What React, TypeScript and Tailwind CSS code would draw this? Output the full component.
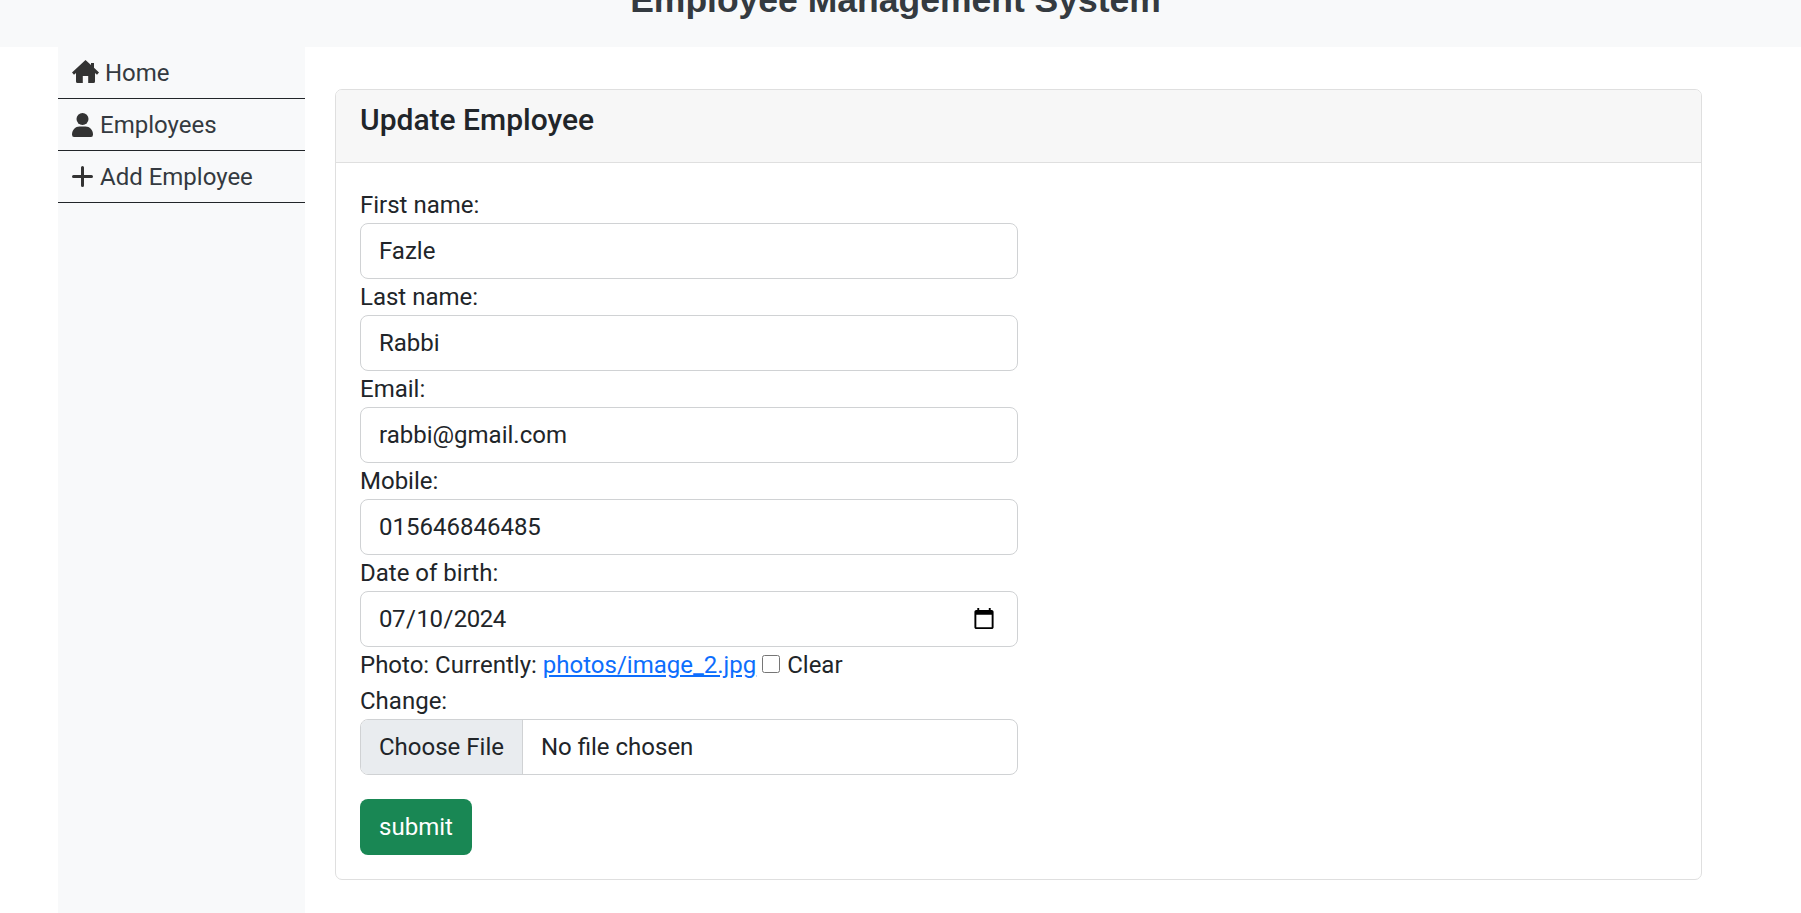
import React from "react";

const inputClass =
  "block w-full h-[56px] px-[18px] py-[9px] text-[24px] leading-[36px] text-[#212529] bg-white border border-[#d0d2d4] rounded-[8px] outline-none";

function HomeIcon() {
  return (
    <svg viewBox="0 0 27 23" className="w-[27px] h-[23px] shrink-0 -mr-[1px] -mt-[2px]" fill="#333">
      <path d="M13.5 0 L19 5 V3 H22 V7.8 L27 12.5 L25 14.7 L23 13 V21.5 Q23 23 21.5 23 H16.2 V16 H10.8 V23 H5.5 Q4 23 4 21.5 V13 L2 14.7 L0 12.5 Z" />
    </svg>
  );
}

function UserIcon() {
  return (
    <svg viewBox="0 0 21 24" className="w-[21px] h-[24px] shrink-0" fill="#333">
      <circle cx="10.5" cy="6" r="6" />
      <path d="M0 21.5 C0 17 3.5 13.5 7.5 13.5 H13.5 C17.5 13.5 21 17 21 21.5 Q21 24 19 24 H2 Q0 24 0 21.5 Z" />
    </svg>
  );
}

function PlusIcon() {
  return (
    <svg viewBox="0 0 21 21" className="w-[21px] h-[21px] shrink-0" fill="none" stroke="#333" strokeWidth="3" strokeLinecap="round">
      <path d="M10.5 1.5 V19.5 M1.5 10.5 H19.5" />
    </svg>
  );
}

function Field({ label, value, type = "text" }: { label: string; value: string; type?: string }) {
  return (
    <div>
      <label className="block leading-[36px]">{label}</label>
      <input type={type} defaultValue={value} className={inputClass} />
    </div>
  );
}

function NavItem({ icon, label }: { icon: React.ReactNode; label: string }) {
  return (
    <a className="flex items-center h-[52px] px-[14px] gap-[7px] border-b border-[#212529] text-[24px] text-[#343a40]">
      {icon}
      <span>{label}</span>
    </a>
  );
}

export default function App() {
  return (
    <div className="min-h-[913px] bg-white text-[24px] leading-[36px] text-[#212529] font-['Roboto',sans-serif] overflow-hidden">
      <header className="h-[47px] bg-[#f8f9fa] overflow-hidden pr-[10px]">
        <h2 className="mt-[-27px] text-center text-[35.5px] leading-[54px] font-bold text-[#343a40] font-['Liberation_Sans',sans-serif]">
          Employee Management System
        </h2>
      </header>
      <div className="flex h-[866px] pl-[58px]">
        <aside className="w-[247px] bg-[#f8f9fa]">
          <NavItem icon={<HomeIcon />} label="Home" />
          <NavItem icon={<UserIcon />} label="Employees" />
          <NavItem icon={<PlusIcon />} label="Add Employee" />
        </aside>
        <main className="pl-[30px] pt-[42px]">
          <div className="w-[1367px] border border-[#dfdfdf] rounded-[7px] overflow-hidden">
            <div className="h-[73px] px-[24px] pt-[8px] bg-[#f7f7f7] border-b border-[#dfdfdf]">
              <h4 className="text-[30px] leading-[43px] font-medium">Update Employee</h4>
            </div>
            <form className="p-[24px]">
              <div className="w-[658px]">
                <Field label="First name:" value="Fazle" />
                <Field label="Last name:" value="Rabbi" />
                <Field label="Email:" value="rabbi@gmail.com" />
                <Field label="Mobile:" value="015646846485" />
                <div>
                  <label className="block leading-[36px]">Date of birth:</label>
                  <input
                    type="date"
                    defaultValue="2024-07-10"
                    className={`${inputClass} pl-[17px] [&::-webkit-datetime-edit]:tracking-[-0.5px] [&::-webkit-calendar-picker-indicator]:mr-[1px]`}
                  />
                </div>
                <div className="leading-[36px]">
                  Photo: Currently: <a className="text-[#0d6efd] underline">photos/image_2.jpg</a>{" "}
                  <input type="checkbox" className="w-[18px] h-[18px] mr-[1px]" /> Clear
                </div>
                <label className="block leading-[36px]">Change:</label>
                <input
                  type="file"
                  className="block w-full h-[56px] text-[24px] leading-[36px] text-[#212529] bg-white border border-[#d0d2d4] rounded-[8px] overflow-hidden file:h-[54px] file:mr-[18px] file:px-[18px] file:border-0 file:border-r file:border-solid file:border-[#d0d2d4] file:bg-[#e9ecef] file:text-[#212529] file:text-[24px]"
                />
              </div>
              <button type="button" className="block mt-[24px] h-[56px] w-[112px] bg-[#198754] text-white text-[24px] rounded-[8px]">
                submit
              </button>
            </form>
          </div>
        </main>
      </div>
    </div>
  );
}
